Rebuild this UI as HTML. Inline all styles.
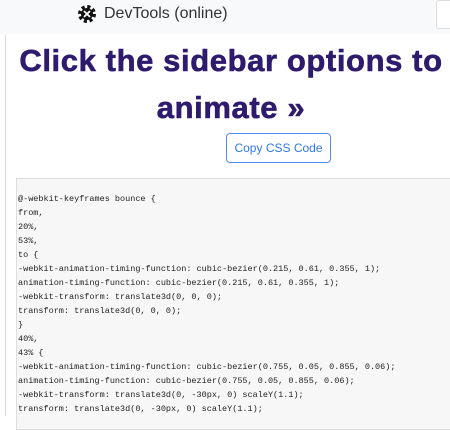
<!DOCTYPE html>
<html><head><style>
html,body{margin:0;padding:0;width:450px;height:416px;overflow:hidden;background:#fff;font-family:"Liberation Sans",sans-serif}
.top{position:absolute;left:0;top:0;width:450px;height:34px;background:#f8f9fa}
.title{position:absolute;left:104px;top:5px;font-size:16px;color:#333}
.gear{position:absolute;left:77px;top:4px}
.tb{position:absolute;left:436px;top:0;width:20px;height:27px;border:1px solid #ddd;border-radius:3px;background:#fff}
.vl{position:absolute;left:5px;top:34px;width:1px;height:382px;background:#ddd}
h1{position:absolute;left:0;width:462px;top:37px;margin:0;text-align:center;font-size:31px;letter-spacing:0.6px;line-height:47px;font-weight:bold;color:#2f1b6e;-webkit-text-stroke:0.6px #2f1b6e}
.btn{position:absolute;left:226px;top:133px;width:103px;height:28px;border:1px solid #4a8ef0;border-radius:4px;color:#2f7ae5;font-size:12px;line-height:28px;text-align:center}
.code{position:absolute;left:16px;top:178px;width:440px;height:250px;background:#f7f7f7;border:1px solid #ddd}
pre{position:absolute;left:18px;top:192px;margin:0;font-family:"Liberation Mono",monospace;font-size:8.5px;line-height:14px;color:#222}
</style></head><body>
<div class="top"></div>
<svg class="gear" width="20" height="20" viewBox="0 0 20 20"><circle cx="10" cy="10" r="7" fill="none" stroke="#111" stroke-width="4" stroke-dasharray="3 2.5"/><circle cx="10" cy="10" r="6" fill="#111"/><path d="M7 7L13 13M13 7L7 13" stroke="#fff" stroke-width="1.8"/></svg>
<div class="title">DevTools (online)</div>
<div class="tb"></div>
<div class="vl"></div>
<h1>Click the sidebar options to<br>animate »</h1>
<div class="btn">Copy CSS Code</div>
<div class="code"></div>
<pre>@-webkit-keyframes bounce {
from,
20%,
53%,
to {
-webkit-animation-timing-function: cubic-bezier(0.215, 0.61, 0.355, 1);
animation-timing-function: cubic-bezier(0.215, 0.61, 0.355, 1);
-webkit-transform: translate3d(0, 0, 0);
transform: translate3d(0, 0, 0);
}
40%,
43% {
-webkit-animation-timing-function: cubic-bezier(0.755, 0.05, 0.855, 0.06);
animation-timing-function: cubic-bezier(0.755, 0.05, 0.855, 0.06);
-webkit-transform: translate3d(0, -30px, 0) scaleY(1.1);
transform: translate3d(0, -30px, 0) scaleY(1.1);</pre>
</body></html>
